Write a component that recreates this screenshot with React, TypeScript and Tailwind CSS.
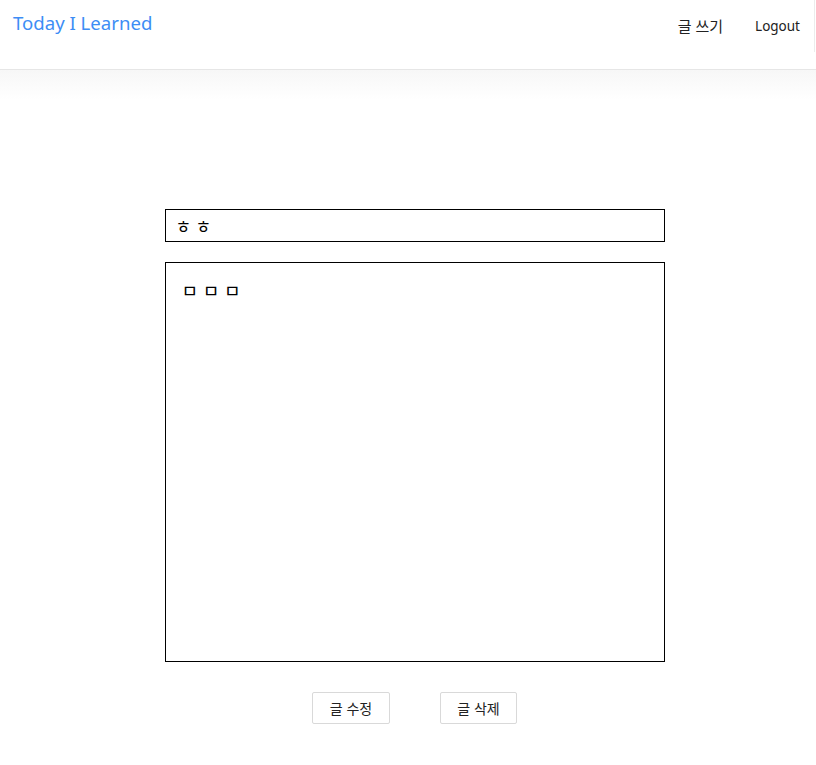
import React from "react";

const kr = { fontFamily: '"Segoe UI", "Noto Sans", "Noto Sans CJK KR", sans-serif' };

export default function App() {
  return (
    <div className="min-h-[765px] bg-white text-black" style={kr}>
      <header className="relative h-[70px] border-b border-[#e6e6e6] flex items-start justify-between">
        <a className="mt-[9px] ml-[13px] text-[18.6px] leading-[28px] text-[#3d8df5]">Today I Learned</a>
        <nav className="flex items-center mt-[15px] mr-[16px] gap-[32px]">
          <a className="text-[15px] leading-[22px] text-[#222]">글 쓰기</a>
          <a className="text-[13.5px] leading-[22px] text-[#222]">Logout</a>
        </nav>
        <div className="absolute right-0 top-0 h-[52px] w-[2px] border-l border-[#ececec]" />
      </header>
      <div className="h-[30px] bg-gradient-to-b from-[#f7f7f7] to-white" />

      <main className="pl-[13px] pt-[109px]">
        <div className="w-[500px] mx-auto flex flex-col">
          <input
            className="h-[33px] border border-black px-[10px] text-[17px] outline-none"
            style={kr}
            defaultValue="ㅎ ㅎ"
          />
          <textarea
            className="mt-[20px] h-[400px] border border-black px-[16px] py-[16px] text-[18px] leading-[24px] resize-none outline-none"
            style={kr}
            defaultValue="ㅁ ㅁ ㅁ"
          />
          <div className="mt-[30px] flex justify-center gap-[50px]">
            <button className="w-[78px] h-[32px] border border-[#d9d9d9] rounded-[2px] bg-white text-[14px] text-[#222]">
              글 수정
            </button>
            <button className="w-[77px] h-[32px] border border-[#d9d9d9] rounded-[2px] bg-white text-[14px] text-[#222]">
              글 삭제
            </button>
          </div>
        </div>
      </main>
    </div>
  );
}
